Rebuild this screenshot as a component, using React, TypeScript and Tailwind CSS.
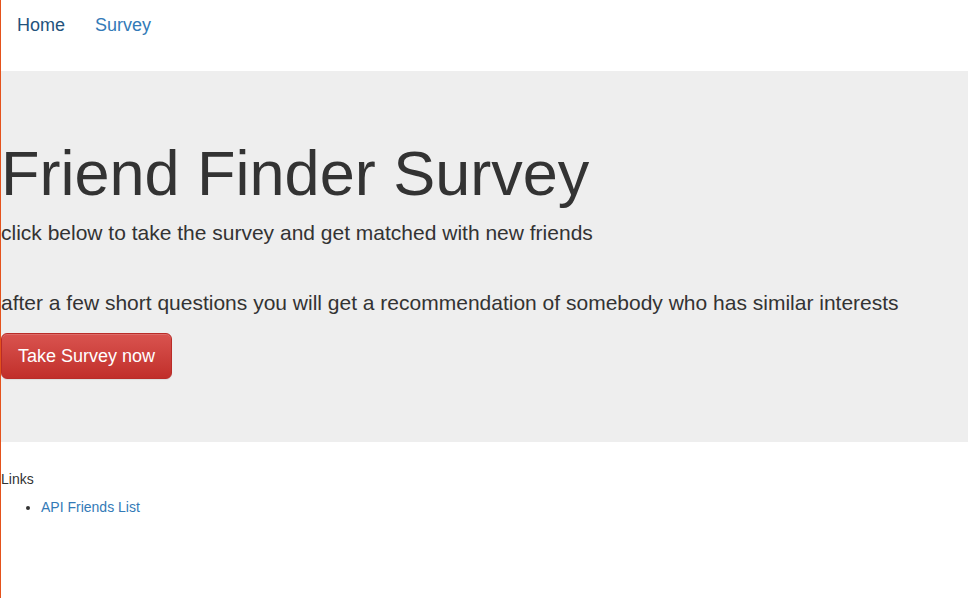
import React from 'react';

const font = { fontFamily: '"Liberation Sans", Arial, Helvetica, sans-serif' };

export default function App() {
  return (
    <div className="min-h-[598px] border-l border-[#e4521c] text-[14px] leading-[20px] text-[#333]" style={font}>
      {/* top nav */}
      <ul className="flex h-[71px] pt-[5px] text-[18px]">
        <li>
          <a href="#" className="block px-[16px] py-[10px] leading-[20px] text-[#23527c]">Home</a>
        </li>
        <li className="ml-[-1px]">
          <a href="#" className="block px-[15px] py-[10px] leading-[20px] text-[#337ab7]">Survey</a>
        </li>
      </ul>

      {/* jumbotron */}
      <div className="bg-[#eeeeee] pt-[48px] pb-[48px]">
        <h1 className="mt-[20px] mb-[10px] text-[63px] leading-[69px] font-normal">Friend Finder Survey</h1>
        <p className="mb-[40px] text-[21px] leading-[30px]">
          click below to take the survey and get matched with new friends
        </p>
        <p className="mb-[15px] text-[21px] leading-[30px]">
          after a few short questions you will get a recommendation of somebody who has similar interests
        </p>
        <p className="mb-[15px]">
          <a
            href="#"
            className="inline-block rounded-[6px] border border-[#b92c28] bg-gradient-to-b from-[#d9534f] to-[#c12e2a] px-[16px] py-[10px] text-[18px] leading-[24px] text-white shadow-[inset_0_1px_0_rgba(255,255,255,0.15),0_1px_1px_rgba(0,0,0,0.075)]"
          >
            Take Survey now
          </a>
        </p>
      </div>

      {/* footer links */}
      <div className="pt-[27px]">
        <div>Links</div>
        <ul className="list-disc pl-[40px] pt-[8px]">
          <li>
            <a href="#" className="text-[#337ab7]">API Friends List</a>
          </li>
        </ul>
      </div>
    </div>
  );
}
